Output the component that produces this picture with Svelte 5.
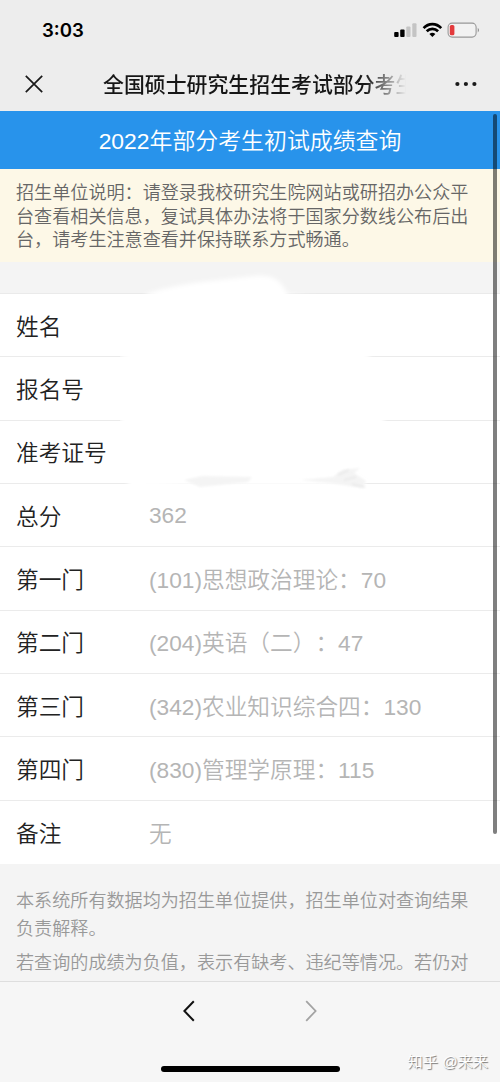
<script>
    const rows = [
        { label: "姓名", value: "" },
        { label: "报名号", value: "" },
        { label: "准考证号", value: "" },
        { label: "总分", value: "362" },
        { label: "第一门", value: "(101)思想政治理论：70" },
        { label: "第二门", value: "(204)英语（二）：47" },
        { label: "第三门", value: "(342)农业知识综合四：130" },
        { label: "第四门", value: "(830)管理学原理：115" },
        { label: "备注", value: "无" },
    ];
</script>

<div class="screen">
    <header class="top">
        <div class="status">
            <span class="time">3:03</span>
            <svg class="signals" width="88" height="18" viewBox="0 0 88 18">
                <rect x="0.2" y="10" width="4.4" height="5" rx="1" fill="#000" />
                <rect x="6.2" y="7.5" width="4.4" height="7.5" rx="1" fill="#000" />
                <rect x="12.3" y="4.5" width="4.2" height="10.5" rx="1" fill="#c4c4c4" />
                <rect x="18.3" y="1.2" width="4.2" height="13.8" rx="1" fill="#c4c4c4" />
                <g fill="none" stroke="#000" stroke-width="2.7">
                    <path d="M29.6 6.1 C34.6 0.8 42.2 0.8 47.2 6.1" />
                    <path d="M32.7 9.3 C36 6 40.8 6 44.1 9.3" />
                </g>
                <path d="M35.4 12 Q38.4 9.4 41.4 12 L38.4 15 Z" fill="#000" />
                <rect x="54.1" y="1.1" width="28" height="14" rx="4" fill="#f2f2f2" stroke="#989898" stroke-width="1.1" />
                <rect x="55.8" y="2.9" width="4.6" height="10.4" rx="1.6" fill="#e33a3c" />
                <path d="M83.8 5.8 Q85.8 8.1 83.8 10.6 Z" fill="#777" />
            </svg>
        </div>
        <nav class="nav">
            <svg width="18" height="18" viewBox="0 0 18 18">
                <path d="M0.8 0.8 L17.2 17.2 M17.2 0.8 L0.8 17.2" stroke="#1a1a1a" stroke-width="1.7" fill="none" />
            </svg>
            <h1>全国硕士研究生招生考试部分考生</h1>
            <svg class="more" width="22" height="6" viewBox="0 0 22 6" fill="#1a1a1a">
                <circle cx="2.4" cy="3" r="2.1" />
                <circle cx="10.9" cy="3" r="2.1" />
                <circle cx="19.4" cy="3" r="2.1" />
            </svg>
        </nav>
    </header>

    <main class="page">
        <h2>2022年部分考生初试成绩查询</h2>
        <p class="notice">
            招生单位说明：请登录我校研究生院网站或研招办公众平台查看相关信息，复试具体办法将于国家分数线公布后出台，请考生注意查看并保持联系方式畅通。
        </p>

        <section class="list">
            {#each rows as row}
                <div class="row">
                    <span class="label">{row.label}</span>
                    <span class="value">{row.value}</span>
                </div>
            {/each}

            <!-- coretan putih penutup data pribadi -->
            <svg class="smear" width="300" height="225" viewBox="0 0 300 225">
                <defs>
                    <filter id="soft" x="-10%" y="-10%" width="120%" height="120%">
                        <feGaussianBlur stdDeviation="2" />
                    </filter>
                    <filter id="faint" x="-10%" y="-50%" width="120%" height="200%">
                        <feGaussianBlur stdDeviation="1.3" />
                    </filter>
                </defs>
                <path
                    filter="url(#soft)"
                    fill="#fff"
                    d="M26 27 Q52 18 90 14 L135 9 Q154 7 162 18 L168 27 L222 34 L248 88 L266 110 L264 158 L240 198 L245 218 L60 218 L8 222 L8 160 L0 155 L0 90 L12 84 Z"
                />
                <g filter="url(#faint)" fill="#f4f4f4">
                    <path d="M64 213 L82 209 L132 210 L128 215 L80 220 Z" />
                    <path d="M180 213 L213 210 L222 203 L240 201 L234 206 L246 214 L242 221 L210 216 Z" />
                </g>
                <path filter="url(#faint)" d="M218 208 L229 203 M224 213 L236 210 M232 217 L245 220" stroke="#ebebeb" stroke-width="2" fill="none" />
            </svg>
        </section>

        <section class="tips">
            <p>本系统所有数据均为招生单位提供，招生单位对查询结果负责解释。</p>
            <p>若查询的成绩为负值，表示有缺考、违纪等情况。若仍对</p>
        </section>

        <div class="scrollbar"></div>
    </main>

    <footer class="bottom">
        <div class="arrows">
            <svg width="12" height="22" viewBox="0 0 12 22">
                <path d="M10.8 1.2 L1.4 11 L10.8 20.8" fill="none" stroke="#111" stroke-width="2" />
            </svg>
            <svg width="12" height="22" viewBox="0 0 12 22">
                <path d="M1.2 1.2 L10.6 11 L1.2 20.8" fill="none" stroke="#a3a3a3" stroke-width="1.8" />
            </svg>
        </div>
        <div class="home"></div>
        <span class="watermark">知乎 @来来</span>
    </footer>
</div>

<style>
    :global(body) {
        margin: 0;
        background: #f4f4f4;
    }

    .screen {
        width: 500px;
        height: 1082px;
        display: flex;
        flex-direction: column;
        overflow: hidden;
        font-family: "Liberation Sans", "Noto Sans CJK SC", sans-serif;
        font-weight: 350;
        text-spacing-trim: space-all;
    }

    h1,
    h2,
    p {
        margin: 0;
        font-weight: inherit;
    }

    svg {
        display: block;
        flex-shrink: 0;
    }

    /* bagian atas */
    .top {
        height: 111px;
        flex-shrink: 0;
        background: #ededed;
    }

    .status {
        height: 60px;
        box-sizing: border-box;
        padding: 0 18px 0 42px;
        display: flex;
        justify-content: space-between;
        align-items: center;
    }

    .time {
        font-family: Inter, sans-serif;
        font-size: 18.6px;
        font-weight: 600;
        color: #000;
    }

    .signals {
        margin-top: 1px;
    }

    .nav {
        height: 48px;
        padding: 0 23px 0 25px;
        display: flex;
        align-items: center;
    }

    h1 {
        width: 318px;
        margin-left: 60px;
        white-space: nowrap;
        font-size: 20.9px;
        line-height: 30px;
        padding-top: 2px;
        font-weight: 500;
        color: #161616;
        mask-image: linear-gradient(to right, #000 262px, transparent 303px);
    }

    .more {
        margin-left: auto;
    }

    /* isi halaman */
    .page {
        position: relative;
        flex: 1;
        min-height: 0;
        overflow: hidden;
        background: #f4f4f4;
    }

    h2 {
        height: 58px;
        line-height: 60px;
        text-align: center;
        font-size: 22.9px;
        color: #fff;
        background: #2893eb;
    }

    .notice {
        height: 93px;
        box-sizing: border-box;
        padding: 13px 14px 0 16px;
        font-size: 18.1px;
        line-height: 23.5px;
        color: #666;
        background: #fdf8e7;
    }

    .list {
        position: relative;
        margin-top: 31px;
        background: #fff;
        border-top: 1px solid #eaeaea;
    }

    .row {
        height: 63.35px;
        box-sizing: border-box;
        padding-left: 16px;
        display: flex;
        align-items: center;
        font-size: 22.7px;
        border-bottom: 1px solid #ebebeb;
    }

    .row:nth-last-of-type(1) {
        border-bottom: none;
    }

    .label {
        width: 133px;
        color: #222;
    }

    .value {
        color: #b5b5b5;
    }

    .smear {
        position: absolute;
        left: 120px;
        top: -27px;
    }

    .tips {
        padding: 23px 14px 0 16px;
        font-size: 18.1px;
        line-height: 28px;
        color: #999;
    }

    .tips p {
        margin-bottom: 6px;
    }

    .scrollbar {
        position: absolute;
        right: 3px;
        top: 3px;
        width: 4px;
        height: 720px;
        border-radius: 2px;
        background: rgba(0, 0, 0, 0.5);
    }

    /* bar bawah */
    .bottom {
        position: relative;
        height: 101px;
        box-sizing: border-box;
        flex-shrink: 0;
        display: flex;
        flex-direction: column;
        align-items: center;
        background: #f6f6f6;
        border-top: 1px solid #dedede;
    }

    .arrows {
        display: flex;
        gap: 110px;
        margin-top: 18px;
    }

    .home {
        width: 179px;
        height: 6px;
        margin-top: 44px;
        border-radius: 3px;
        background: #000;
    }

    .watermark {
        position: absolute;
        right: 12px;
        bottom: 8px;
        font-size: 15.2px;
        line-height: 24px;
        color: #fff;
        text-shadow: 1px 1px 1px #777;
    }
</style>
